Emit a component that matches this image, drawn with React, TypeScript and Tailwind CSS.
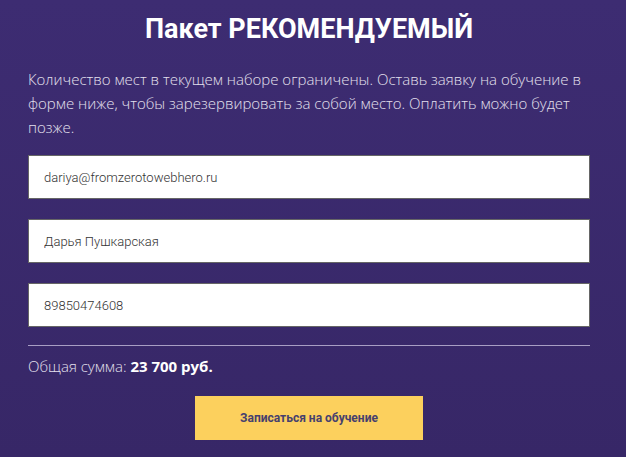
import React from 'react';

const fields = ['dariya@fromzerotowebhero.ru', 'Дарья Пушкарская', '89850474608'];

export default function App() {
  return (
    <div className="w-[626px] h-[457px] overflow-hidden bg-gradient-to-b from-[#3d2c72] to-[#372767] pl-[28px] pr-[36px] pt-[13px]">
      <h1 className="text-center text-white font-bold text-[27px] leading-[32px] font-['Roboto',sans-serif]">
        Пакет РЕКОМЕНДУЕМЫЙ
      </h1>

      <p className="mt-[22px] text-[15px] leading-[24px] font-light text-[#e4e0ee] font-['Open_Sans',sans-serif]">
        Количество мест в текущем наборе ограничены. Оставь заявку на обучение в форме ниже, чтобы зарезервировать за собой место. Оплатить можно будет позже.
      </p>

      <div className="mt-[16px] flex flex-col gap-[20px]">
        {fields.map((v) => (
          <input
            key={v}
            defaultValue={v}
            className="h-[44px] w-full bg-white border border-[#666] px-[15px] text-[13px] font-light text-[#333] font-['Roboto',sans-serif] outline-none"
          />
        ))}
      </div>

      <div className="mt-[18px] border-t border-[#a89ec4]" />

      <p className="mt-[10px] text-[15px] leading-[20px] text-[#e4e0ee] font-['Open_Sans',sans-serif]">
        <span className="font-light">Общая сумма: </span>
        <span className="font-bold text-white">23 700 руб.</span>
      </p>

      <div className="mt-[20px] flex justify-center">
        <button className="w-[228px] h-[44px] bg-[#fcd05d] text-[#46406e] text-[12px] font-bold font-['Roboto',sans-serif]">
          Записаться на обучение
        </button>
      </div>
    </div>
  );
}
